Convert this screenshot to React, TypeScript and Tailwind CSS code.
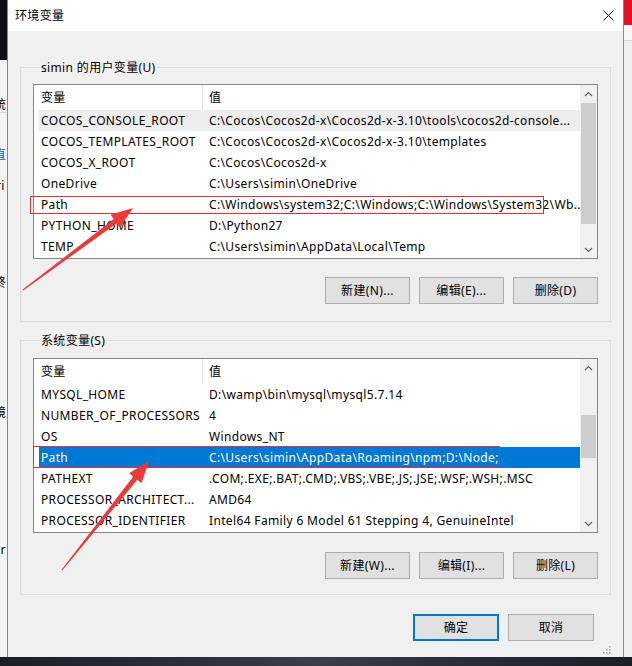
const userVars = [
  ["COCOS_CONSOLE_ROOT", "C:\\Cocos\\Cocos2d-x\\Cocos2d-x-3.10\\tools\\cocos2d-console..."],
  ["COCOS_TEMPLATES_ROOT", "C:\\Cocos\\Cocos2d-x\\Cocos2d-x-3.10\\templates"],
  ["COCOS_X_ROOT", "C:\\Cocos\\Cocos2d-x"],
  ["OneDrive", "C:\\Users\\simin\\OneDrive"],
  ["Path", "C:\\Windows\\system32;C:\\Windows;C:\\Windows\\System32\\Wb..."],
  ["PYTHON_HOME", "D:\\Python27"],
  ["TEMP", "C:\\Users\\simin\\AppData\\Local\\Temp"],
];

const sysVars = [
  ["MYSQL_HOME", "D:\\wamp\\bin\\mysql\\mysql5.7.14"],
  ["NUMBER_OF_PROCESSORS", "4"],
  ["OS", "Windows_NT"],
  ["Path", "C:\\Users\\simin\\AppData\\Roaming\\npm;D:\\Node;"],
  ["PATHEXT", ".COM;.EXE;.BAT;.CMD;.VBS;.VBE;.JS;.JSE;.WSF;.WSH;.MSC"],
  ["PROCESSOR_ARCHITECT...", "AMD64"],
  ["PROCESSOR_IDENTIFIER", "Intel64 Family 6 Model 61 Stepping 4, GenuineIntel"],
];

function Chevron({ up }: { up?: boolean }) {
  return (
    <svg width="9" height="6" viewBox="0 0 9 6">
      <path d={up ? "M1 5 L4.5 1.5 L8 5" : "M1 1 L4.5 4.5 L8 1"} fill="none" stroke="#606060" strokeWidth="1.2" />
    </svg>
  );
}

function VarList({
  rows,
  hover,
  selected,
  thumbTop,
  thumbHeight,
}: {
  rows: string[][];
  hover?: number;
  selected?: number;
  thumbTop: number;
  thumbHeight: number;
}) {
  return (
    <div className="flex h-[175px] border border-[#828790] bg-white">
      <div className="flex min-w-0 flex-1 flex-col">
        {/* header */}
        <div className="flex h-[25px] shrink-0 items-center">
          <div className="flex h-full w-[169px] items-center border-r border-[#e5e5e5] pl-[7px]">变量</div>
          <div className="pl-[6px]">值</div>
        </div>
        {rows.map(([name, value], i) => (
          <div
            key={i}
            className={
              i === selected
                ? "ml-[5px] flex h-[21px] items-center bg-[#0078d7] text-white"
                : i === hover
                  ? "ml-[5px] flex h-[21px] items-center bg-[#ededed]"
                  : "ml-[5px] flex h-[21px] items-center"
            }
          >
            <div className="w-[168px] shrink-0 overflow-hidden whitespace-nowrap pl-[2px]">{name}</div>
            <div className="min-w-0 flex-1 overflow-hidden whitespace-nowrap pl-[2px]">{value}</div>
          </div>
        ))}
      </div>
      {/* scrollbar */}
      <div className="flex w-[17px] shrink-0 flex-col bg-[#f0f0f0]">
        <div className="flex h-[17px] items-center justify-center">
          <Chevron up />
        </div>
        <div className="flex-1">
          <div className="mx-[1px] bg-[#cdcdcd]" style={{ marginTop: thumbTop, height: thumbHeight }} />
        </div>
        <div className="flex h-[17px] items-center justify-center">
          <Chevron />
        </div>
      </div>
    </div>
  );
}

function Btn({ label }: { label: string }) {
  return (
    <button className="h-[27px] w-[85px] border border-[#adadad] bg-[#e1e1e1] text-[12px] text-black">{label}</button>
  );
}

function arrowPoints(tx: number, ty: number, px: number, py: number) {
  const len = Math.hypot(px - tx, py - ty);
  const dx = (px - tx) / len;
  const dy = (py - ty) / len;
  const nx = -dy;
  const ny = dx;
  const H = 22;
  const W = 8;
  const w1 = 2.6;
  const w0 = 0.6;
  const cx = px - dx * H;
  const cy = py - dy * H;
  const pts = [
    [tx + nx * w0, ty + ny * w0],
    [cx + nx * w1, cy + ny * w1],
    [cx + nx * W, cy + ny * W],
    [px, py],
    [cx - nx * W, cy - ny * W],
    [cx - nx * w1, cy - ny * w1],
    [tx - nx * w0, ty - ny * w0],
  ];
  return pts.map((p) => p.join(",")).join(" ");
}

export default function App() {
  return (
    <div className="relative flex h-[666px] w-[632px] flex-col overflow-hidden bg-[#1d1f29] font-['Noto_Sans','Noto_Sans_CJK_SC',sans-serif] text-[12px] leading-[17px] tracking-[0.35px] text-black">
      <div className="flex h-[657px] shrink-0">
        {/* window behind, left edge */}
        <div className="flex w-[7px] shrink-0 flex-col overflow-hidden">
          <div className="h-[60px] shrink-0 bg-[#0e0f14]" />
          <div className="flex flex-1 flex-col bg-[#f4f4f4] text-[12px] leading-[14px]">
            <div className="-ml-[6px] mt-[38px] border-b border-[#d5d5d5]">统</div>
            <div className="-ml-[6px] mt-[35px] text-[#1c5fb8]">直</div>
            <div className="-ml-[4px] mt-[17px]">ri</div>
            <div className="-ml-[6px] mt-[83px]">终</div>
            <div className="-ml-[6px] mt-[116px]">境</div>
            <div className="-ml-[3px] mt-[123px]">ir</div>
          </div>
        </div>

        {/* dialog */}
        <div className="flex w-[617px] shrink-0 flex-col border-x border-[#5a8fd6] bg-[#f0f0f0]">
          <div className="flex h-[31px] shrink-0 items-center justify-between bg-white pl-[7px] pr-[9px]">
            <span>环境变量</span>
            <svg width="11" height="11" viewBox="0 0 11 11">
              <path d="M0.5 0.5 L10.5 10.5 M10.5 0.5 L0.5 10.5" stroke="#111" strokeWidth="1" />
            </svg>
          </div>

          <div className="flex flex-1 flex-col px-[12px]">
            <div className="mt-[36px] border border-[#dcdcdc] px-[12px] pb-[17px]">
              <div className="-mt-[9px] ml-[7px] w-fit bg-[#f0f0f0] px-[1px]">simin 的用户变量(U)</div>
              <div className="mt-[8px]">
                <VarList rows={userVars} hover={0} thumbTop={1} thumbHeight={121} />
              </div>
              <div className="mt-[18px] flex justify-end gap-[9px]">
                <Btn label="新建(N)..." />
                <Btn label="编辑(E)..." />
                <Btn label="删除(D)" />
              </div>
            </div>

            <div className="mt-[18px] border border-[#dcdcdc] px-[12px] pb-[15px]">
              <div className="-mt-[9px] ml-[7px] w-fit bg-[#f0f0f0] px-[1px]">系统变量(S)</div>
              <div className="mt-[9px]">
                <VarList rows={sysVars} selected={3} thumbTop={39} thumbHeight={43} />
              </div>
              <div className="mt-[19px] flex justify-end gap-[9px]">
                <Btn label="新建(W)..." />
                <Btn label="编辑(I)..." />
                <Btn label="删除(L)" />
              </div>
            </div>

            <div className="mt-[19px] flex justify-end gap-[9px] pr-[17px]">
              <button className="h-[27px] w-[86px] border-2 border-[#0078d7] bg-[#e1e1e1] text-[12px]">确定</button>
              <button className="h-[27px] w-[86px] border border-[#adadad] bg-[#e1e1e1] text-[12px]">取消</button>
            </div>

            <div className="mt-auto flex justify-end pb-[3px]">
              <svg width="9" height="9" viewBox="0 0 9 9">
                {[
                  [7, 1],
                  [7, 4],
                  [4, 4],
                  [7, 7],
                  [4, 7],
                  [1, 7],
                ].map(([x, y], i) => (
                  <rect key={i} x={x} y={y} width="1.5" height="1.5" fill="#a0a0a0" />
                ))}
              </svg>
            </div>
          </div>
        </div>

        {/* window behind, right edge */}
        <div className="flex w-[8px] shrink-0 flex-col">
          <div className="h-[25px] bg-[#e81123]" />
          <div className="h-[15px] bg-[#f7f7f7]" />
          <div className="flex-1 border-t border-[#d6d6d6] bg-[#efefef]" />
        </div>
      </div>
      <div className="h-[9px] shrink-0 bg-gradient-to-r from-[#1b1d27] via-[#3a3d4a] to-[#1b1d27]" />

      {/* annotation overlay */}
      <svg className="pointer-events-none absolute inset-0" width="632" height="666">
        <rect x="30.5" y="196.5" width="513" height="17" fill="none" stroke="#e0303a" strokeWidth="1" />
        <rect x="33.5" y="446.5" width="466" height="21" fill="none" stroke="#e0303a" strokeWidth="1" />
        <polygon points={arrowPoints(23, 290, 133, 208)} fill="#ec3a3c" />
        <polygon points={arrowPoints(62, 570, 149, 461)} fill="#ec3a3c" />
      </svg>
    </div>
  );
}
